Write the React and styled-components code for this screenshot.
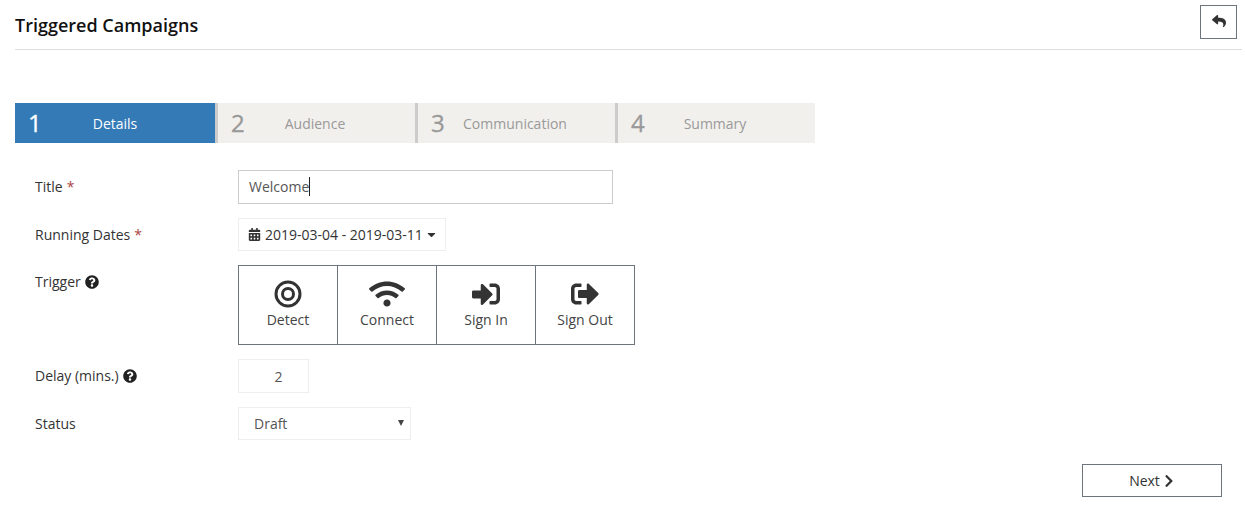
import React from "react";
import styled, { createGlobalStyle } from "styled-components";
import {
  FaCalendarAlt,
  FaCaretDown,
  FaChevronRight,
  FaQuestionCircle,
  FaReply,
  FaSignInAlt,
  FaSignOutAlt,
  FaWifi,
} from "react-icons/fa";

const GlobalStyle = createGlobalStyle`
  * { box-sizing: border-box; }
  html, body { margin: 0; background: #fff; }
  body {
    font-family: "Open Sans", "Liberation Sans", sans-serif;
    font-size: 14px;
    color: #333;
  }
`;

const steps = [
  { number: 1, label: "Details" },
  { number: 2, label: "Audience" },
  { number: 3, label: "Communication" },
  { number: 4, label: "Summary" },
];

function Bullseye() {
  return (
    <svg width="28" height="28" viewBox="0 0 28 28" fill="none" stroke="#333">
      <circle cx="14" cy="14" r="12" strokeWidth="3" />
      <circle cx="14" cy="14" r="5.5" strokeWidth="3" />
    </svg>
  );
}

const triggers = [
  { label: "Detect", icon: <Bullseye /> },
  { label: "Connect", icon: <FaWifi size={36} /> },
  { label: "Sign In", icon: <FaSignInAlt size={28} /> },
  { label: "Sign Out", icon: <FaSignOutAlt size={28} /> },
];

function App() {
  return (
    <Page>
      <GlobalStyle />
      <Header>
        <Title>Triggered Campaigns</Title>
        <BackButton>
          <FaReply size={14} />
        </BackButton>
      </Header>

      <Wizard>
        {steps.map((step, i) => (
          <Step key={step.number} $active={i === 0} $first={i === 0}>
            <StepNumber>{step.number}</StepNumber>
            <StepLabel>{step.label}</StepLabel>
            <span />
          </Step>
        ))}
      </Wizard>

      <Form>
        <Row>
          <Label>
            Title <Required>*</Required>
          </Label>
          <TitleInput>
            Welcome
            <Caret />
          </TitleInput>
        </Row>
        <Row>
          <Label>
            Running Dates <Required>*</Required>
          </Label>
          <DateButton>
            <FaCalendarAlt size={13} />
            <DateText>2019-03-04 - 2019-03-11</DateText>
            <FaCaretDown size={13} />
          </DateButton>
        </Row>
        <Row>
          <Label>
            Trigger <HelpIcon />
          </Label>
          <TriggerGroup>
            {triggers.map((t) => (
              <TriggerCell key={t.label}>
                <TriggerIcon>{t.icon}</TriggerIcon>
                {t.label}
              </TriggerCell>
            ))}
          </TriggerGroup>
        </Row>
        <Row>
          <Label>
            Delay (mins.) <HelpIcon />
          </Label>
          <DelayInput>2</DelayInput>
        </Row>
        <Row>
          <Label>Status</Label>
          <SelectWrap>
            <StatusSelect defaultValue="Draft">
              <option>Draft</option>
              <option>Active</option>
            </StatusSelect>
          </SelectWrap>
        </Row>
      </Form>

      <Footer>
        <NextButton>
          Next <NextIcon />
        </NextButton>
      </Footer>
    </Page>
  );
}

export default App;

const Page = styled.div`
  width: 1245px;
  height: 505px;
  overflow: hidden;
  padding: 5px 3px 0 15px;
`;

const Header = styled.div`
  display: flex;
  justify-content: space-between;
  align-items: flex-start;
  height: 45px;
  padding-right: 5px;
  border-bottom: 1px solid #ddd;
`;

const Title = styled.h1`
  margin: 7px 0 0;
  font-size: 18px;
  line-height: 26px;
  font-weight: 600;
  color: #111;
`;

const BackButton = styled.div`
  width: 37px;
  height: 34px;
  border: 1px solid #6c757d;
  display: flex;
  align-items: center;
  justify-content: center;
  padding-bottom: 2px;
  color: #333;
`;

const Wizard = styled.div`
  display: flex;
  margin-top: 53px;
  width: 800px;
`;

const Step = styled.div`
  width: 200px;
  height: 40px;
  display: grid;
  grid-template-columns: 1fr auto 1fr;
  align-items: center;
  padding-left: 13px;
  padding-right: ${(p) => (p.$first ? "13px" : "16px")};
  background: ${(p) => (p.$active ? "#337ab7" : "#f2f0ed")};
  color: ${(p) => (p.$active ? "#fff" : "#999")};
  border-left: ${(p) => (p.$first ? "none" : "3px solid #ccc")};
`;

const StepNumber = styled.span`
  font-size: 24px;
  line-height: 40px;
  -webkit-text-stroke: 0.3px currentColor;
`;

const StepLabel = styled.span`
  font-size: 14px;
`;

const Form = styled.div`
  margin-top: 27px;
  padding-left: 20px;
  display: flex;
  flex-direction: column;
  gap: 14px;
`;

const Row = styled.div`
  display: flex;
  align-items: flex-start;
`;

const Label = styled.div`
  width: 203px;
  line-height: 20px;
  padding-top: 7px;
  display: flex;
  align-items: center;
  gap: 4px;
`;

const Required = styled.span`
  color: #a94442;
`;

const HelpIcon = styled(FaQuestionCircle)`
  font-size: 14px;
  color: #222;
`;

const TitleInput = styled.div`
  width: 375px;
  height: 34px;
  border: 1px solid #ccc;
  padding: 0 10px 1px 10px;
  display: flex;
  align-items: center;
  color: #555;
`;

const Caret = styled.span`
  width: 1px;
  height: 19px;
  background: #222;
`;

const DateButton = styled.div`
  width: 208px;
  height: 33px;
  border: 1px solid #eee;
  padding-left: 9px;
  display: flex;
  align-items: center;
  gap: 4px;
  color: #333;
  svg {
    flex-shrink: 0;
  }
  svg:last-child {
    margin-left: -2px;
  }
`;

const DateText = styled.span`
  white-space: nowrap;
`;

const TriggerGroup = styled.div`
  display: flex;
  border: 1px solid #6c757d;
  height: 80px;
  width: 397px;
`;

const TriggerCell = styled.div`
  width: 99px;
  display: flex;
  flex-direction: column;
  align-items: center;
  padding-top: 12px;
  line-height: 20px;
  border-left: 1px solid #6c757d;
  color: #444;
  &:first-child {
    width: 98px;
    border-left: none;
  }
`;

const TriggerIcon = styled.div`
  height: 32px;
  display: flex;
  align-items: center;
  color: #333;
`;

const DelayInput = styled.div`
  width: 71px;
  height: 34px;
  border: 1px solid #eee;
  padding-left: 10px;
  display: flex;
  align-items: center;
  justify-content: center;
  color: #555;
`;

const SelectWrap = styled.div`
  position: relative;
  width: 173px;
  height: 33px;
  &::after {
    content: "";
    position: absolute;
    right: 7px;
    top: 13px;
    border-left: 3px solid transparent;
    border-right: 3px solid transparent;
    border-top: 6px solid #444;
    pointer-events: none;
  }
`;

const StatusSelect = styled.select`
  appearance: none;
  width: 100%;
  height: 100%;
  border: 1px solid #eee;
  border-radius: 0;
  background: #fff;
  padding: 0 15px;
  font-family: inherit;
  font-size: 14px;
  color: #555;
`;

const Footer = styled.div`
  display: flex;
  justify-content: flex-end;
  margin-top: 24px;
  padding-right: 20px;
`;

const NextButton = styled.div`
  width: 140px;
  height: 33px;
  border: 1px solid #6c757d;
  display: flex;
  align-items: center;
  justify-content: center;
  gap: 2px;
  color: #333;
  padding-left: 1px;
`;

const NextIcon = styled(FaChevronRight)`
  font-size: 14px;
`;
